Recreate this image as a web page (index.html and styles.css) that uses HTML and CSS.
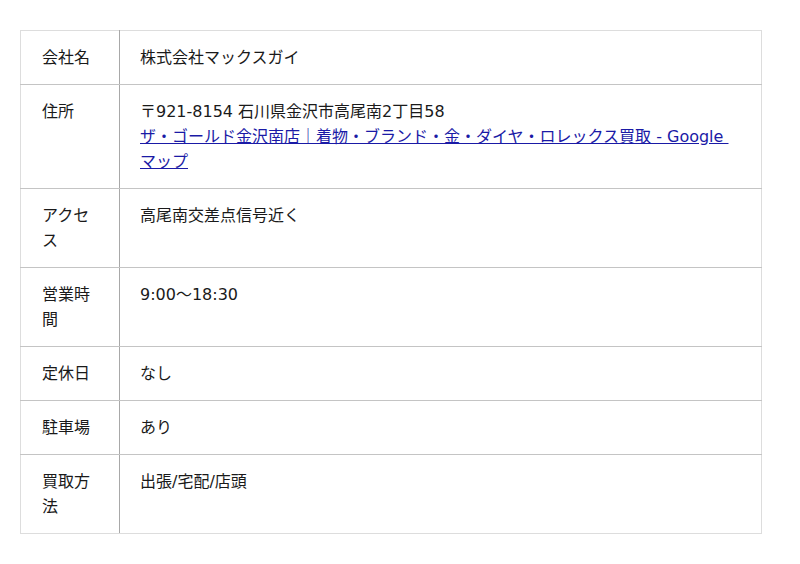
FILE: index.html
```html
<!DOCTYPE html>
<html lang="ja">
<head>
<meta charset="utf-8">
<title>会社概要</title>
<link rel="stylesheet" href="styles.css">
</head>
<body>
<div class="wrap">
<table class="info">
  <tr><th>会社名</th><td>株式会社マックスガイ</td></tr>
  <tr><th>住所</th><td>〒921-8154 石川県金沢市高尾南2丁目58<br><a href="#">ザ・ゴールド金沢南店｜着物・ブランド・金・ダイヤ・ロレックス買取 - Google&nbsp;<wbr>マップ</a></td></tr>
  <tr><th>アクセス</th><td>高尾南交差点信号近く</td></tr>
  <tr><th>営業時間</th><td>9:00～18:30</td></tr>
  <tr><th>定休日</th><td>なし</td></tr>
  <tr><th>駐車場</th><td>あり</td></tr>
  <tr><th>買取方法</th><td>出張/宅配/店頭</td></tr>
</table>
</div>
</body>
</html>
```
FILE: styles.css
```css
html, body {
  margin: 0;
  padding: 0;
  background: #fff;
}
body {
  font-family: "DejaVu Sans", "Noto Sans CJK JP", sans-serif;
  font-size: 16px;
  color: #1a1a1a;
}
.wrap {
  padding: 30px 38px 0 20px;
}
.info {
  width: 100%;
  border-collapse: collapse;
  border: 1px solid #ddd;
}
.info th,
.info td {
  text-align: left;
  vertical-align: top;
  font-weight: normal;
  line-height: 25px;
  padding: 14px 20px 14px 21px;
  border-bottom: 1px solid #c4c4c4;
}
.info tr:last-child th,
.info tr:last-child td {
  border-bottom: 1px solid #ddd;
}
.info th {
  width: 57px;
  border-right: 1px solid #a8a8a8;
}
.info td {
  padding-left: 20px;
}
.info a {
  color: #1a1aa6;
}
```
